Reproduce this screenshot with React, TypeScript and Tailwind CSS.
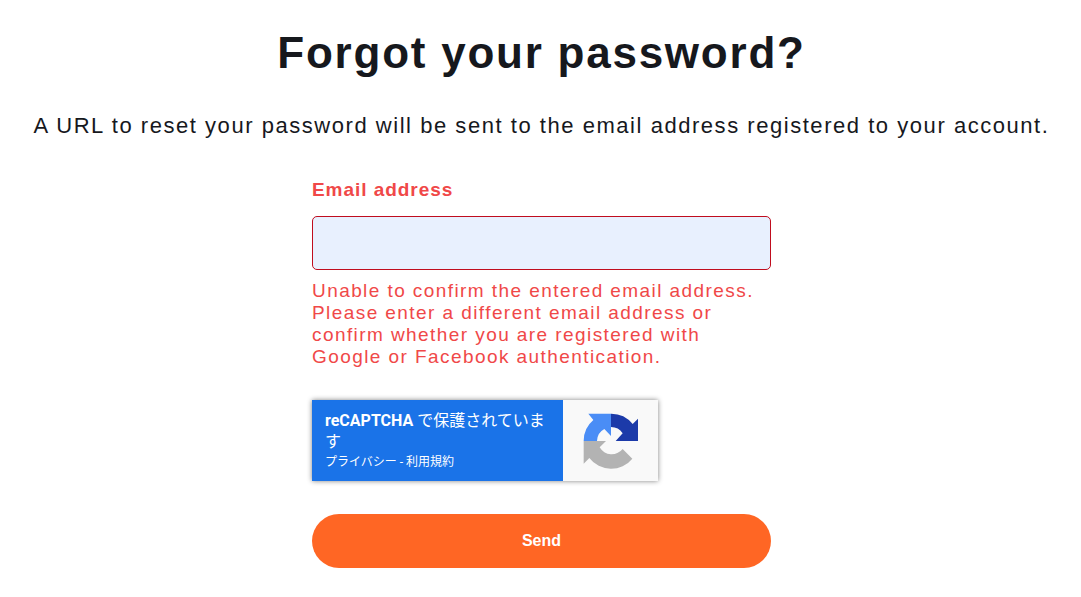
import React, { useState } from 'react';

const RecaptchaLogo: React.FC = () => (
  <svg viewBox="38 38 168 168" className="h-14 w-14" aria-hidden="true">
    <path fill="#4a8df6" d="M54 40H122V107L102 86A42 42 0 0 0 80 122H40A82 82 0 0 1 69 59Z" />
    <path fill="#1c3aa9" d="M122 40A82 82 0 0 1 187 71L203 55V122H136L157 99A42 42 0 0 0 122 80Z" />
    <path fill="#b3b3b3" d="M40 122H107L88 141A42 42 0 0 0 157 146L186 175A82 82 0 0 1 57 173L40 190Z" />
  </svg>
);

const App: React.FC = () => {
  const [email, setEmail] = useState('');

  return (
    <main className="pt-6 pr-4 pb-7 pl-[18px] font-['Liberation_Sans',sans-serif] text-[#16181d]">
      <h1 className="text-center text-[44px] leading-[58px] font-bold tracking-[0.04em]">Forgot your password?</h1>
      <p className="mt-7 text-center text-[22px] leading-8 tracking-[0.07em]">
        A URL to reset your password will be sent to the email address registered to your account.
      </p>

      <form className="mx-auto mt-8 w-full max-w-[459px]" onSubmit={(e) => e.preventDefault()}>
        <label htmlFor="email" className="block text-[19px] leading-8 font-bold tracking-wider text-[#f04848]">
          Email address
        </label>
        <input
          id="email"
          type="email"
          value={email}
          onChange={(e) => setEmail(e.target.value)}
          aria-invalid="true"
          aria-describedby="email-error"
          className="mt-2.5 block h-[54px] w-full rounded-[5px] border border-[#c00d1e] bg-[#e8f0fe] px-4 outline-none"
        />
        <p id="email-error" className="mt-2.5 text-[19px] leading-[22px] tracking-[0.075em] text-[#f04848]">
          Unable to confirm the entered email address. Please enter a different email address or confirm whether you are registered with Google or Facebook authentication.
        </p>

        <div className="mt-8 flex h-[81px] w-[346px] bg-[#f9f9f9] font-[Roboto,'Noto_Sans_CJK_JP',sans-serif] shadow-[0_0_5px_#808080]">
          <div className="w-[251px] bg-[#1a73e8] px-[13px] pt-2.5 text-white">
            <p className="text-base leading-[21px]">
              <strong>reCAPTCHA</strong> で保護されています
            </p>
            <p className="text-xs leading-5">
              <a href="#privacy">プライバシー</a> - <a href="#terms">利用規約</a>
            </p>
          </div>
          <div className="flex flex-1 items-center justify-center">
            <RecaptchaLogo />
          </div>
        </div>

        <button type="submit" className="mt-[33px] h-[54px] w-full rounded-full bg-[#ff6624] text-base font-bold text-white">
          Send
        </button>
      </form>
    </main>
  );
};

export default App;
